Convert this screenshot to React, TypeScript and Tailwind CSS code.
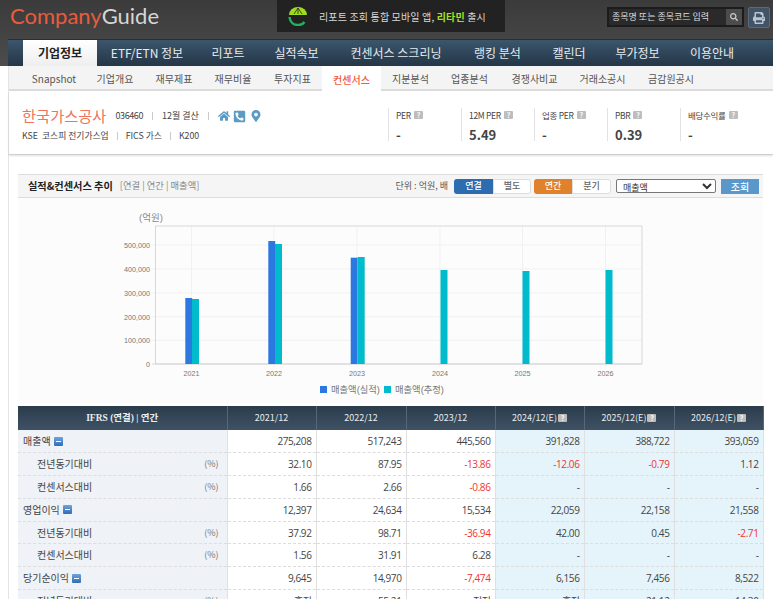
import { FaHome, FaMapMarkerAlt, FaPhoneSquareAlt, FaPrint, FaSearch } from 'react-icons/fa';

const font = "font-['Noto_Sans_CJK_KR','Noto_Sans',sans-serif]";

const mainTabs = [
  { label: '기업정보', cls: 'w-[74px] ml-[15px]', active: true },
  { label: 'ETF/ETN 정보', cls: 'w-[100px]' },
  { label: '리포트', cls: 'w-[62px]' },
  { label: '실적속보', cls: 'w-[75px]' },
  { label: '컨센서스 스크리닝', cls: 'w-[124px]' },
  { label: '랭킹 분석', cls: 'w-[79px]' },
  { label: '캘린더', cls: 'w-[64px]' },
  { label: '부가정보', cls: 'w-[73px]' },
  { label: '이용안내', cls: 'w-[76px]' },
];

const subTabs = [
  { label: 'Snapshot', cls: 'w-[62px] ml-[14px]' },
  { label: '기업개요', cls: 'w-[60px]' },
  { label: '재무제표', cls: 'w-[58px]' },
  { label: '재무비율', cls: 'w-[60px]' },
  { label: '투자지표', cls: 'w-[59px]' },
  { label: '컨센서스', cls: 'w-[59px]', active: true },
  { label: '지분분석', cls: 'w-[59px]' },
  { label: '업종분석', cls: 'w-[59px]' },
  { label: '경쟁사비교', cls: 'w-[71px]' },
  { label: '거래소공시', cls: 'w-[65px]' },
  { label: '금감원공시', cls: 'w-[72px]' },
];

const metrics = [
  { label: 'PER', value: '-' },
  { label: '12M PER', value: '5.49' },
  { label: '업종 PER', value: '-' },
  { label: 'PBR', value: '0.39' },
  { label: '배당수익률', value: '-' },
];

const rows = [
  { name: '매출액', main: true, cells: ['275,208', '517,243', '445,560', '391,828', '388,722', '393,059'] },
  { name: '전년동기대비', cells: ['32.10', '87.95', '-13.86', '-12.06', '-0.79', '1.12'] },
  { name: '컨센서스대비', cells: ['1.66', '2.66', '-0.86', '-', '-', '-'] },
  { name: '영업이익', main: true, cells: ['12,397', '24,634', '15,534', '22,059', '22,158', '21,558'] },
  { name: '전년동기대비', cells: ['37.92', '98.71', '-36.94', '42.00', '0.45', '-2.71'] },
  { name: '컨센서스대비', cells: ['1.56', '31.91', '6.28', '-', '-', '-'] },
  { name: '당기순이익', main: true, cells: ['9,645', '14,970', '-7,474', '6,156', '7,456', '8,522'] },
  { name: '전년동기대비', cells: ['흑전', '55.21', '적전', '흑전', '21.12', '14.30'] },
];

const years = ['2021/12', '2022/12', '2023/12'];
const estYears = ['2024/12(E)', '2025/12(E)', '2026/12(E)'];

const Help = () => (
  <span className="inline-flex h-[8px] w-[9px] items-center justify-center rounded-[1px] bg-[#bdbdbd] text-[7px] leading-none font-bold text-white">?</span>
);

const Minus = () => (
  <span className="inline-flex h-[9px] w-[9px] items-center justify-center rounded-[1px] bg-gradient-to-b from-[#6fa3dc] to-[#2f6db5]">
    <span className="h-[1px] w-[5px] bg-white" />
  </span>
);

const Chart = () => {
  const ticks = [
    { y: 245, t: '500,000' },
    { y: 269, t: '400,000' },
    { y: 293, t: '300,000' },
    { y: 316.7, t: '200,000' },
    { y: 340.3, t: '100,000' },
    { y: 364, t: '0' },
  ];
  const xs = [
    { x: 191.5, t: '2021' },
    { x: 274, t: '2022' },
    { x: 357, t: '2023' },
    { x: 440, t: '2024' },
    { x: 522.5, t: '2025' },
    { x: 605.5, t: '2026' },
  ];
  const blue = [
    { x: 185.3, top: 298 },
    { x: 268.3, top: 241 },
    { x: 350.7, top: 257.7 },
  ];
  const teal = [
    { x: 192, top: 299 },
    { x: 275, top: 244 },
    { x: 357.7, top: 257 },
    { x: 440.5, top: 270 },
    { x: 522.5, top: 271 },
    { x: 605.5, top: 270 },
  ];
  return (
    <svg width="745" height="205" viewBox="18 198 745 205" className="block" fontFamily="'Liberation Sans', 'Noto Sans CJK KR', sans-serif">
      <text x="139" y="221" fontSize="9.5" fill="#888">(억원)</text>
      {ticks.map((t) => (
        <g key={t.t}>
          <line x1="152" x2="642" y1={t.y} y2={t.y} stroke={t.t === '0' ? '#d8d8d8' : '#f1f1f1'} />
          <text x="150" y={t.y + 3} fontSize="7.2" textAnchor="end" fill="#777">{t.t}</text>
        </g>
      ))}
      {xs.map((x) => (
        <g key={x.t}>
          <line x1={x.x} x2={x.x} y1="226" y2="367" stroke="#f1f1f1" />
          <text x={x.x} y="376" fontSize="7.2" textAnchor="middle" fill="#777">{x.t}</text>
        </g>
      ))}
      <rect x="155.5" y="226" width="486.5" height="138" fill="none" stroke="#d8d8d8" />
      {blue.map((b) => (
        <rect key={b.x} x={b.x} y={b.top} width="6.9" height={364 - b.top} fill="#2a78e0" />
      ))}
      {teal.map((b) => (
        <rect key={b.x} x={b.x} y={b.top} width="7" height={364 - b.top} fill="#00bbcc" />
      ))}
      <rect x="320" y="386" width="7" height="7" fill="#2a78e0" />
      <text x="331" y="393" fontSize="9.3" fill="#777">매출액(실적)</text>
      <rect x="384" y="386" width="7" height="7" fill="#00bbcc" />
      <text x="395" y="393" fontSize="9.3" fill="#777">매출액(추정)</text>
    </svg>
  );
};

export default function App() {
  return (
    <div className={`h-[599px] w-[773px] overflow-hidden bg-white ${font} text-[#333]`}>
      {/* top header */}
      <div className="bg-gradient-to-b from-[#3b3b3b] to-[#4c4c4c]">
        <div className="flex h-[39px]">
          <div className="ml-[10px] flex h-[32px] w-[267px] items-center font-['Lato',sans-serif] text-[22px] leading-none">
            <span className="text-[#e85c3c]">Company</span>
            <span className="text-[#d6d6d6]">Guide</span>
          </div>
          <div className="flex h-[32px] w-[228px] items-center bg-[#222222] pl-[11px]">
            <svg width="20" height="20" viewBox="0 0 20 20">
              <path d="M1 9a9 8 0 0 1 18 0z" fill="#9fdc1e" />
              <path d="M6 8 10 2M10 8V2M14 8l-4-6" stroke="#222" strokeWidth="0.8" />
              <path d="M1.5 11c.5 5 4 8 8.500 8 3 0 5-1 6.500-3" fill="none" stroke="#1fb45a" strokeWidth="2.500" />
            </svg>
            <span className="ml-[11px] text-[10px] tracking-[0.15px] text-[#d8d8d8]">
              리포트 조회 통합 모바일 앱, <b className="text-[#a6e01f]">리타민</b> 출시
            </span>
          </div>
          <div className="ml-[102px] mt-[7px] flex h-[20px] w-[137px] items-center border-2 border-[#1c1c1c] bg-[#2a2a2a] pl-[3px]">
            <span className="flex-1 text-[9px] text-[#dddddd]">종목명 또는 종목코드 입력</span>
            <span className="flex h-[16px] w-[16px] items-center justify-center bg-[#4c4c4c]">
              <FaSearch className="text-[8px] text-[#cccccc]" />
            </span>
          </div>
          <div className="ml-[4px] mt-[7px] flex h-[21px] w-[22px] items-center justify-center rounded-[2px] border border-[#5d6b78] bg-[#3f5468]">
            <FaPrint className="text-[12px] text-[#b9c4ce]" />
          </div>
        </div>
        {/* main nav */}
        <div className="ml-[8px] flex h-[27px] border-t border-[#22303c] bg-gradient-to-b from-[#3c566c] to-[#243647]">
          {mainTabs.map((t) =>
            t.active ? (
              <div key={t.label} className={`${t.cls} flex items-center justify-center bg-gradient-to-b from-[#ffffff] to-[#eeeeee] text-[12px] font-bold text-[#222]`}>
                {t.label}
              </div>
            ) : (
              <div key={t.label} className={`${t.cls} flex items-center justify-center text-[12px] text-[#e6ebef]`}>
                {t.label}
              </div>
            ),
          )}
        </div>
      </div>

      <div className="ml-[8px] border-l border-[#e4e4e4]">
        {/* sub nav */}
        <div className="flex h-[25px] border-b-2 border-[#dcdcdc] bg-[#f4f4f4]">
          {subTabs.map((t) => (
            <div
              key={t.label}
              className={`${t.cls} flex items-center justify-center pt-[1px] text-[10px] ${t.active ? 'h-[25px] bg-white font-medium text-[#ef5a45]' : 'text-[#555]'}`}
            >
              {t.label}
            </div>
          ))}
        </div>

        {/* company info */}
        <div className="flex h-[64px] border-b border-[#cfcfcf] shadow-[0_1px_2px_rgba(0,0,0,0.12)]">
          <div className="w-[379px] pl-[13px] pt-[14px]">
            <div className="flex h-[22px] items-center text-[9px] text-[#444]">
              <span className="text-[15.3px] leading-none text-[#f0735c]">한국가스공사</span>
              <span className="ml-[9px] tracking-[-0.4px]">036460</span>
              <span className="mx-[9px] h-[8px] w-px bg-[#cccccc]" />
              <span>12월 결산</span>
              <span className="mx-[9px] h-[8px] w-px bg-[#cccccc]" />
              <FaHome className="text-[12px] text-[#5b9bc4]" />
              <FaPhoneSquareAlt className="ml-[3px] text-[13px] text-[#5b9bc4]" />
              <FaMapMarkerAlt className="ml-[4px] text-[12px] text-[#5b9bc4]" />
            </div>
            <div className="mt-[2px] flex items-center text-[8.8px] text-[#444]">
              <span>KSE&nbsp;&nbsp;코스피 전기가스업</span>
              <span className="mx-[8px] h-[8px] w-px bg-[#cccccc]" />
              <span>FICS 가스</span>
              <span className="mx-[8px] h-[8px] w-px bg-[#cccccc]" />
              <span>K200</span>
            </div>
          </div>
          {metrics.map((m) => (
            <div key={m.label} className="mt-[17px] h-[33px] w-[73px] border-l border-[#e2e2e2] pl-[7px]">
              <div className="flex h-[14px] items-center gap-[3px] text-[8.500px] tracking-[-0.3px] text-[#444]">
                {m.label}
                <Help />
              </div>
              <div className="mt-[3px] text-[13px] leading-[19px] font-bold text-[#444]">{m.value}</div>
            </div>
          ))}
        </div>

        {/* performance section */}
        <div className="mr-[10px] ml-[9px] mt-[19px]">
          <div className="flex h-[24px] items-center border-y border-[#dddddd] bg-[#f5f5f5] pr-[4px] pl-[10px]">
            <span className="text-[10.2px] font-bold text-[#222]">실적&컨센서스 추이</span>
            <span className="ml-[7px] text-[9.3px] text-[#888]">[연결 | 연간 | 매출액]</span>
            <span className="ml-auto text-[9px] text-[#555]">단위 : 억원, 배</span>
            <div className="ml-[6px] flex h-[15px] w-[77px] text-[9px] font-medium">
              <span className="flex w-[39px] items-center justify-center rounded-l-[3px] bg-[#2d6cae] text-white">연결</span>
              <span className="flex w-[38px] items-center justify-center rounded-r-[3px] border border-[#dddddd] bg-white text-[#666]">별도</span>
            </div>
            <div className="ml-[3px] flex h-[15px] w-[77px] text-[9px] font-medium">
              <span className="flex w-[38px] items-center justify-center rounded-l-[3px] bg-[#e0812b] text-white">연간</span>
              <span className="flex w-[39px] items-center justify-center rounded-r-[3px] border border-[#dddddd] bg-white text-[#666]">분기</span>
            </div>
            <select className="ml-[5px] h-[14px] w-[100px] rounded-[2px] border border-[#777777] bg-white pl-[2px] text-[9px] leading-none text-[#333]">
              <option>매출액</option>
            </select>
            <button className="ml-[5px] h-[15px] w-[38px] bg-[#5a98cc] text-[10px] font-medium text-white">조회</button>
          </div>
          <div className="bg-[#fcfcfc]">
            <Chart />
          </div>

          {/* results table */}
          <table className="mt-[3px] w-[745px] table-fixed border-collapse text-[10px]">
            <colgroup>
              <col className="w-[209px]" />
              <col className="w-[89px]" />
              <col className="w-[90px]" />
              <col className="w-[89px]" />
              <col className="w-[89px]" />
              <col className="w-[90px]" />
              <col className="w-[89px]" />
            </colgroup>
            <thead>
              <tr className="h-[24px] bg-gradient-to-b from-[#2b3c4c] to-[#3f5264] text-[#e8edf1]">
                <th className="border-r border-[#55677a] font-['Liberation_Serif','Noto_Sans_CJK_KR',serif] text-[9.500px] font-bold">IFRS (연결) | 연간</th>
                {years.map((y) => (
                  <th key={y} className="border-r border-[#55677a] text-[9px] font-normal">{y}</th>
                ))}
                {estYears.map((y) => (
                  <th key={y} className="border-r border-[#55677a] text-[9px] font-normal">
                    <span className="inline-flex items-center gap-[1px]">
                      {y}
                      <Help />
                    </span>
                  </th>
                ))}
              </tr>
            </thead>
            <tbody>
              {rows.map((r, i) => (
                <tr key={i} className="h-[22.8px] border-b border-dashed border-[#dddddd]">
                  <td className="border-r border-[#e0e0e0] bg-[#eff2f6] p-0 text-[10px] leading-[14px] text-[#444]">
                    {r.main ? (
                      <span className="flex items-center gap-[3px] pl-[5px]">
                        {r.name}
                        <Minus />
                      </span>
                    ) : (
                      <span className="flex items-center justify-between pr-[8px] pl-[19px]">
                        {r.name}
                        <span className="text-[9px] text-[#777]">(%)</span>
                      </span>
                    )}
                  </td>
                  {r.cells.map((c, j) => (
                    <td
                      key={j}
                      className={`border-r border-[#e0e0e0] pr-[4px] text-right font-['Open_Sans','Noto_Sans_CJK_KR',sans-serif] leading-[14px] tracking-[-0.4px] ${j > 2 ? 'bg-[#e5f4fa]' : 'bg-white'} ${c.startsWith('-') && c.length > 1 ? 'text-[#ee3333]' : 'text-[#444]'}`}
                    >
                      {c}
                    </td>
                  ))}
                </tr>
              ))}
            </tbody>
          </table>
        </div>
      </div>
    </div>
  );
}
